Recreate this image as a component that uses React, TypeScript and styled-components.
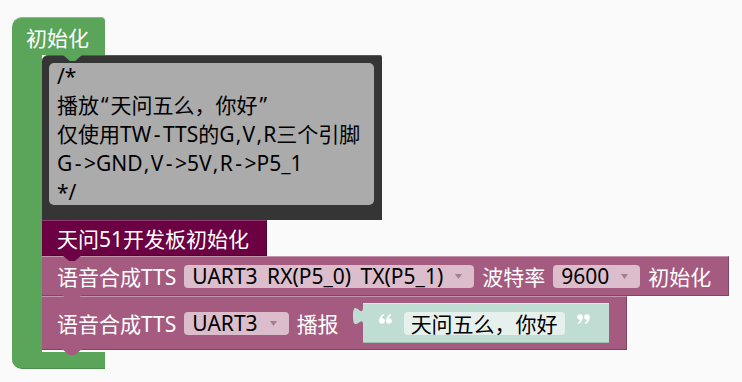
import { FC, ReactNode } from 'react'
import styled, { createGlobalStyle } from 'styled-components'

const colors = {
    page: '#fafafa',
    green: '#5ba55b',
    greenLight: '#83bb83',
    maroon: '#6b0043',
    maroonLight: '#8f3d6e',
    mauve: '#a55b80',
    mauveLight: '#c396ad',
    mauveDark: '#7f4662',
    field: '#dbbdcc',
    arrow: '#a47d91',
    teal: '#c0ddd3',
    tealField: '#e6f1ed',
    commentFrame: '#353535',
    commentPaper: '#ababab',
    text: '#000000',
    white: '#ffffff',
}

const font = `"Noto Sans", "Noto Sans CJK SC", sans-serif`

const GlobalStyle = createGlobalStyle`
    body {
        margin: 0;
        background: ${colors.page};
        font-family: ${font};
    }
`

const Canvas = styled.div`
    width: 742px;
    height: 382px;
    padding: 17px 0 0 12px;
    box-sizing: border-box;
    overflow: hidden;
`

const EventBlock = styled.div`
    display: flex;
    flex-direction: column;
    align-items: flex-start;
`

const Hat = styled.div`
    width: 93px;
    height: 38px;
    box-sizing: border-box;
    padding-left: 14px;
    display: flex;
    align-items: center;
    background: ${colors.green};
    border-top: 1px solid ${colors.greenLight};
    border-radius: 10px 4px 0 0;
    color: ${colors.white};
    font-size: 21px;
`

const Body = styled.div`
    display: flex;
    align-items: stretch;
`

const Arm = styled.div`
    width: 30px;
    background: ${colors.green};
`

const Stack = styled.div`
    position: relative;
    display: flex;
    flex-direction: column;
    align-items: flex-start;
    padding-bottom: 2px;

    &::before {
        content: '';
        position: absolute;
        left: 21px;
        top: 0;
        width: 19px;
        height: 6px;
        background: ${colors.green};
        clip-path: polygon(0 0, 100% 0, 64% 100%, 36% 100%);
        z-index: 3;
    }
`

const Foot = styled.div`
    width: 93px;
    height: 16px;
    background: ${colors.green};
    border-radius: 0 0 0 10px;
    border-bottom: 1px solid #4d8f4d;
`

const CommentFrame = styled.div`
    width: 340px;
    height: 165px;
    box-sizing: border-box;
    padding: 7px 8px 15px 7px;
    background: ${colors.commentFrame};
    border-radius: 6px 2px 0 0;
    border-top: 1px solid #5a5a5a;
`

const CommentPaper = styled.div`
    height: 100%;
    box-sizing: border-box;
    padding: 0 0 0 8px;
    background: ${colors.commentPaper};
    border-radius: 5px;
    color: ${colors.text};
    font-size: 21px;
    overflow: hidden;
`

const CommentLines = styled.div`
    margin-top: -1px;
`

const CommentLine = styled.div`
    height: 29px;
    line-height: 29px;
    white-space: nowrap;
`

// YaHei sets its punctuation wider than Noto Sans does
const Punct = styled.span<{ $pad: number }>`
    display: inline-block;
    padding: 0 ${({ $pad }) => $pad}px;
`

type BlockProps = {
    $color: string
    $light: string
    $dark: string
    $height: number
}

const Block = styled.div<BlockProps>`
    position: relative;
    display: flex;
    align-items: center;
    gap: 8px;
    height: ${({ $height }) => $height}px;
    box-sizing: border-box;
    padding: 0 17px 0 15px;
    background: ${({ $color }) => $color};
    border-top: 1px solid ${({ $light }) => $light};
    border-bottom: 1px solid ${({ $dark }) => $dark};
    border-right: 1px solid ${({ $dark }) => $dark};
    color: ${colors.white};
    font-size: 21px;
    white-space: nowrap;

    &::after {
        content: '';
        position: absolute;
        left: 20px;
        bottom: -6px;
        width: 20px;
        height: 6px;
        background: ${({ $color }) => $color};
        clip-path: polygon(0 0, 100% 0, 64% 100%, 36% 100%);
        z-index: 2;
    }
`

const Dropdown = styled.div`
    display: flex;
    align-items: center;
    gap: 12px;
    height: 23px;
    padding: 0 12px 0 8px;
    background: ${colors.field};
    border-radius: 4px;
    color: ${colors.text};
    word-spacing: 4px;
`

const Arrow = styled.svg`
    width: 7px;
    height: 5px;
    fill: ${colors.arrow};
`

const Label = styled.span`
    color: ${colors.white};
`

const TextInput = styled.div`
    display: flex;
    align-items: center;
    margin-left: 5px;
`

const Tab = styled.svg`
    width: 11px;
    height: 40px;
    display: block;
    fill: ${colors.teal};
`

const TextBlock = styled.div`
    display: flex;
    align-items: center;
    gap: 12px;
    height: 40px;
    box-sizing: border-box;
    padding: 0 19px 0 16px;
    background: ${colors.teal};
    border-top: 1px solid #dcede7;
    border-bottom: 1px solid #9fbfb3;
`

const QuoteMark = styled.svg`
    width: 13px;
    height: 10px;
    margin-bottom: 8px;
    fill: ${colors.white};
`

const TextField = styled.div`
    height: 23px;
    display: flex;
    align-items: center;
    padding: 0 7px;
    background: ${colors.tealField};
    border-radius: 4px;
    color: ${colors.text};
`

const Select: FC<{ children: ReactNode }> = ({ children }) => (
    <Dropdown>
        <span>{children}</span>
        <Arrow viewBox="0 0 7 5">
            <polygon points="0,0 7,0 3.5,5" />
        </Arrow>
    </Dropdown>
)

const Quote: FC<{ close?: boolean }> = ({ close }) => (
    <QuoteMark viewBox="0 0 13 10">
        <g transform={close ? 'rotate(180 6.5 5)' : undefined}>
            <circle cx="3" cy="7" r="2.8" />
            <path d="M0.2 7 C0.2 3.6 1.8 1.2 4.8 0 L5.4 1 C3.8 1.9 3 3 3 4.6 Z" />
            <circle cx="10" cy="7" r="2.8" />
            <path d="M7.2 7 C7.2 3.6 8.8 1.2 11.8 0 L12.4 1 C10.8 1.9 10 3 10 4.6 Z" />
        </g>
    </QuoteMark>
)

const comment = [
    '/*',
    '播放“天问五么，你好”',
    '仅使用TW-TTS的G,V,R三个引脚',
    'G->GND,V->5V,R->P5_1',
    '*/',
]

const padFor: Record<string, number> = { '-': 2.5, ',': 1.2, '“': 2, '”': 2 }

const CommentText: FC<{ text: string }> = ({ text }) => (
    <CommentLine>
        {text.split(/([-,“”])/).map((part, i) =>
            padFor[part] ? <Punct key={i} $pad={padFor[part]}>{part}</Punct> : part
        )}
    </CommentLine>
)

const App: FC = () => {
    return (
        <Canvas>
            <GlobalStyle />
            <EventBlock>
                <Hat>初始化</Hat>
                <Body>
                    <Arm />
                    <Stack>
                        <CommentFrame>
                            <CommentPaper>
                                <CommentLines>
                                    {comment.map(line => <CommentText key={line} text={line} />)}
                                </CommentLines>
                            </CommentPaper>
                        </CommentFrame>
                        <Block $color={colors.maroon} $light={colors.maroonLight} $dark="#4d0030" $height={36}>
                            <Label>天问51开发板初始化</Label>
                        </Block>
                        <Block $color={colors.mauve} $light={colors.mauveLight} $dark={colors.mauveDark} $height={40}>
                            <Label>语音合成TTS</Label>
                            <Select>UART3 RX(P5_0) TX(P5_1)</Select>
                            <Label>波特率</Label>
                            <Select>9600</Select>
                            <Label>初始化</Label>
                        </Block>
                        <Block $color={colors.mauve} $light={colors.mauveLight} $dark={colors.mauveDark} $height={54}>
                            <Label>语音合成TTS</Label>
                            <Select>UART3</Select>
                            <Label>播报</Label>
                            <TextInput>
                                <Tab viewBox="0 0 11 40">
                                    <path d="M11 4 c0 13 -10 -10 -10 9 s10 -3 10 9 Z" />
                                </Tab>
                                <TextBlock>
                                    <Quote />
                                    <TextField>天问五么，你好</TextField>
                                    <Quote close />
                                </TextBlock>
                            </TextInput>
                        </Block>
                    </Stack>
                </Body>
                <Foot />
            </EventBlock>
        </Canvas>
    )
}

export default App
